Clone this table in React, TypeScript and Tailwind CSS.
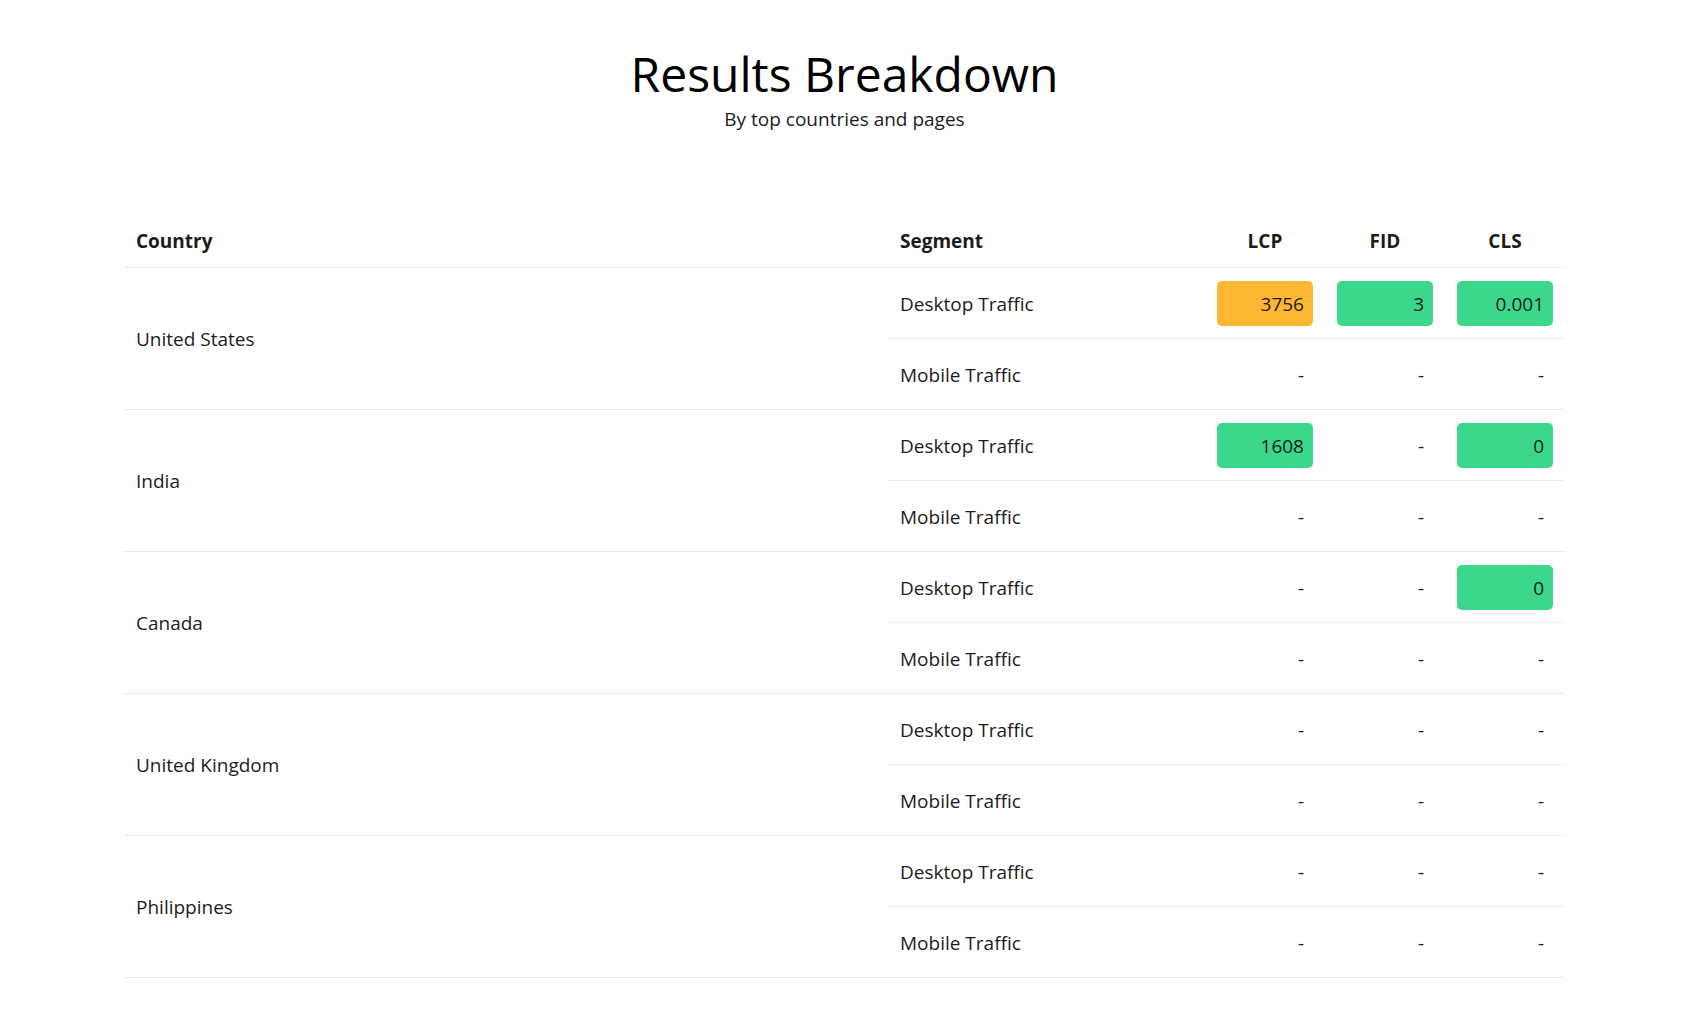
import React from 'react';

type Cell = { value: string; tone?: 'good' | 'warn' };

interface SegmentRow {
  segment: string;
  lcp: Cell;
  fid: Cell;
  cls: Cell;
}

interface CountryGroup {
  country: string;
  rows: [SegmentRow, SegmentRow];
}

const dash: Cell = { value: '-' };

const emptyRow = (segment: string): SegmentRow => ({ segment, lcp: dash, fid: dash, cls: dash });

const data: CountryGroup[] = [
  {
    country: 'United States',
    rows: [
      {
        segment: 'Desktop Traffic',
        lcp: { value: '3756', tone: 'warn' },
        fid: { value: '3', tone: 'good' },
        cls: { value: '0.001', tone: 'good' },
      },
      emptyRow('Mobile Traffic'),
    ],
  },
  {
    country: 'India',
    rows: [
      {
        segment: 'Desktop Traffic',
        lcp: { value: '1608', tone: 'good' },
        fid: dash,
        cls: { value: '0', tone: 'good' },
      },
      emptyRow('Mobile Traffic'),
    ],
  },
  {
    country: 'Canada',
    rows: [
      {
        segment: 'Desktop Traffic',
        lcp: dash,
        fid: dash,
        cls: { value: '0', tone: 'good' },
      },
      emptyRow('Mobile Traffic'),
    ],
  },
  {
    country: 'United Kingdom',
    rows: [emptyRow('Desktop Traffic'), emptyRow('Mobile Traffic')],
  },
  {
    country: 'Philippines',
    rows: [emptyRow('Desktop Traffic'), emptyRow('Mobile Traffic')],
  },
];

// metric cell: coloured badge when there is a score, a plain dash otherwise
const MetricCell: React.FC<{ cell: Cell; last: boolean }> = ({ cell, last }) => {
  const border = last ? 'border-[#e6e6e6]' : 'border-[#ececec]';
  return (
    <div className={`h-[71px] px-3 pt-px flex items-center justify-end border-b ${border}`}>
      {cell.tone ? (
        <span
          className={`w-[96px] h-[45px] rounded-[5px] flex items-center justify-end pr-[9px] ${
            cell.tone === 'warn' ? 'bg-[#ffb633]' : 'bg-[#3bd78a]'
          }`}
        >
          {cell.value}
        </span>
      ) : (
        <span className="pr-[9px]">{cell.value}</span>
      )}
    </div>
  );
};

export default function App() {
  return (
    <div
      className="min-h-screen bg-white text-[#1c1c1c] pl-[124px] pt-[46px]"
      style={{ fontFamily: '"Open Sans", "Noto Sans", sans-serif' }}
    >
      <div className="w-[1441px]">
        {/* heading */}
        <div className="text-center">
          <h1 className="text-[48px] leading-[56px] font-medium text-black">Results Breakdown</h1>
          <p className="mt-[3px] text-[19px] leading-[28px]">By top countries and pages</p>
        </div>

        {/* table */}
        <div className="mt-[82px] grid grid-cols-[764px_317px_120px_120px_120px] text-[19px] leading-[28px]">
          <div className="h-[53px] px-3 flex items-center font-bold border-b border-[#e6e6e6]">Country</div>
          <div className="h-[53px] px-3 flex items-center font-bold border-b border-[#e6e6e6]">Segment</div>
          <div className="h-[53px] px-3 flex items-center justify-center font-bold border-b border-[#e6e6e6]">LCP</div>
          <div className="h-[53px] px-3 flex items-center justify-center font-bold border-b border-[#e6e6e6]">FID</div>
          <div className="h-[53px] px-3 flex items-center justify-center font-bold border-b border-[#e6e6e6]">CLS</div>

          {data.map((group) => (
            <React.Fragment key={group.country}>
              <div className="row-span-2 px-3 flex items-center border-b border-[#e6e6e6]">{group.country}</div>
              {group.rows.map((row, i) => (
                <React.Fragment key={row.segment}>
                  <div
                    className={`h-[71px] px-3 pt-px flex items-center border-b ${
                      i === 1 ? 'border-[#e6e6e6]' : 'border-[#ececec]'
                    }`}
                  >
                    {row.segment}
                  </div>
                  <MetricCell cell={row.lcp} last={i === 1} />
                  <MetricCell cell={row.fid} last={i === 1} />
                  <MetricCell cell={row.cls} last={i === 1} />
                </React.Fragment>
              ))}
            </React.Fragment>
          ))}
        </div>
      </div>
    </div>
  );
}
